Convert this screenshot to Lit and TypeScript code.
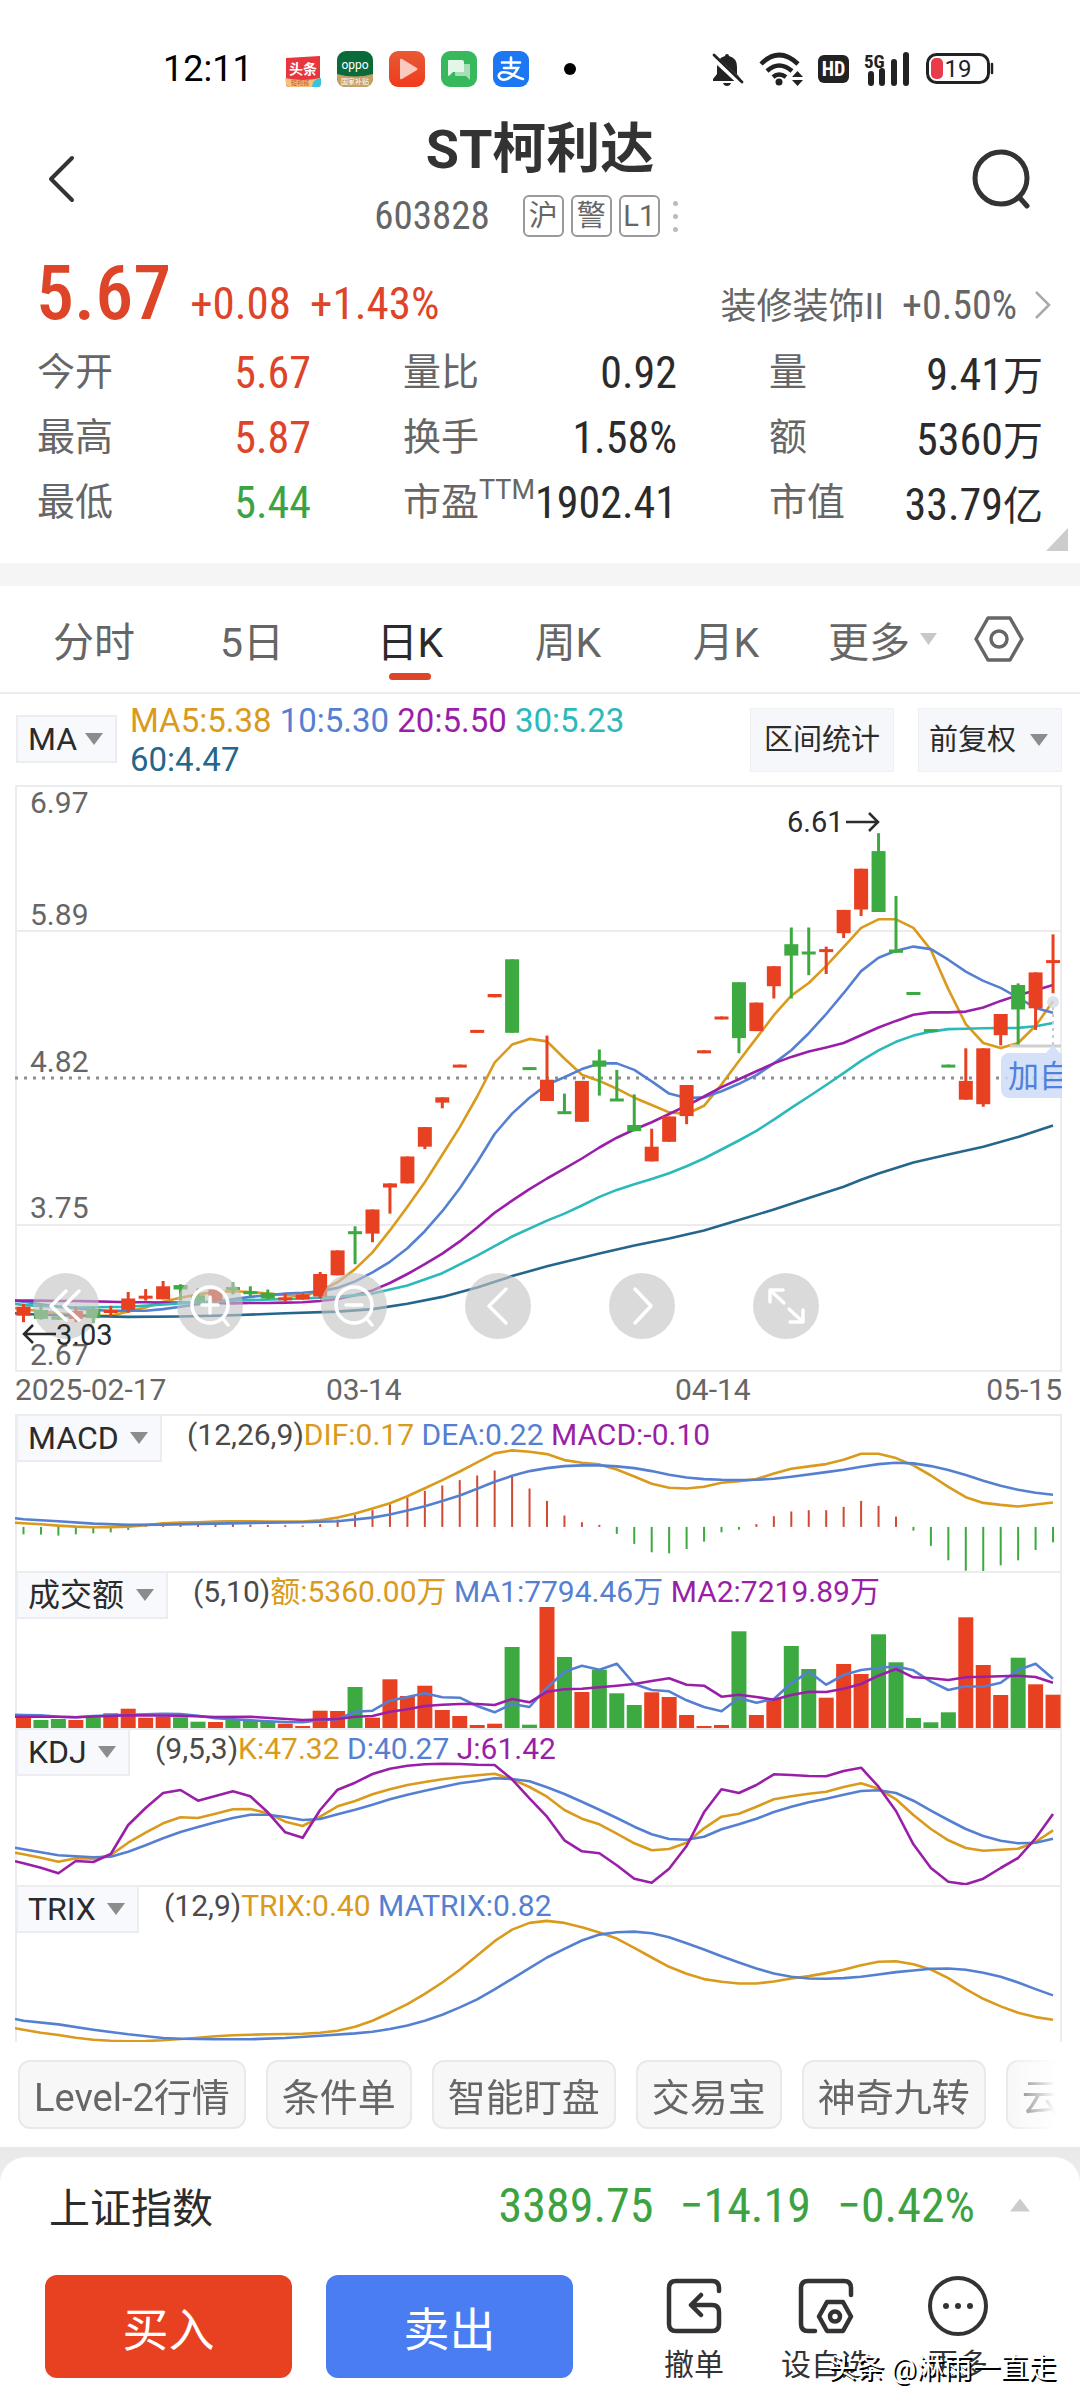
import { LitElement, html, svg, css, nothing } from "lit";
import { customElement, property } from "lit/decorators.js";
import { classMap } from "lit/directives/class-map.js";

const UP = "#e84122";
const DOWN = "#3daa41";
const ORANGE = "#da9a1c";
const BLUE = "#5580d2";
const PURPLE = "#9a1fa8";
const TEAL = "#2bb9b9";
const NAVY = "#24668c";

/* Plot geometry shared by the price chart and all indicator panels. */
const WIDTH = 1047;
const PRICE_HEIGHT = 587;
const PANEL_HEIGHT = 157;
const SLOT = 17.45;
const xAt = (i: number) => 8.5 + i * SLOT;

type Domain = [number, number];
type Line = { color: string; points: number[]; sparse?: boolean };
type Legend = { color: string; text: string };

const scale = (v: number, [top, bottom]: Domain, height: number) =>
  Math.round(((v - top) / (bottom - top)) * height * 10) / 10;

function drawLine(line: Line, domain: Domain, height: number) {
  const pairs: Array<[number, number]> = [];
  if (line.sparse) {
    for (let i = 0; i < line.points.length; i += 2) pairs.push([line.points[i], line.points[i + 1]]);
  } else {
    line.points.forEach((v, i) => pairs.push([i, v]));
  }
  const start = `0,${scale(pairs[0][1] - (pairs[1][1] - pairs[0][1]) / 2, domain, height)}`;
  const path = pairs.map(([i, v]) => `${xAt(i).toFixed(1)},${scale(v, domain, height)}`).join(" ");
  return svg`<polyline points="${start} ${path}" fill="none" stroke=${line.color} stroke-width="2.6" stroke-linejoin="round"></polyline>`;
}

/* Candles: direction, high, body top, body bottom, low (axis units, top down). */
const PRICE_DOMAIN: Domain = [12, 1450];
const CANDLES: Array<[string, number, number, number, number]> = [
  ["u", 1283, 1290, 1312, 1328], ["d", 1283, 1298, 1320, 1322], ["d", 1310, 1314, 1322, 1322],
  ["u", 1290, 1300, 1320, 1328], ["d", 1290, 1295, 1318, 1330], ["u", 1288, 1298, 1304, 1314],
  ["u", 1254, 1270, 1298, 1305], ["u", 1247, 1263, 1269, 1275], ["u", 1227, 1240, 1272, 1272],
  ["d", 1235, 1237, 1248, 1275], ["d", 1245, 1262, 1276, 1282], ["u", 1248, 1248, 1276, 1280],
  ["d", 1230, 1242, 1246, 1260], ["d", 1240, 1252, 1256, 1265], ["d", 1248, 1256, 1270, 1272],
  ["u", 1258, 1267, 1271, 1278], ["u", 1258, 1260, 1272, 1273], ["u", 1205, 1210, 1265, 1270],
  ["u", 1152, 1152, 1213, 1213], ["d", 1093, 1105, 1111, 1186], ["u", 1052, 1052, 1111, 1132],
  ["u", 988, 988, 998, 1062], ["u", 922, 922, 988, 988], ["u", 850, 850, 898, 904],
  ["u", 777, 777, 790, 804], ["u", 697, 697, 703, 703], ["u", 612, 612, 619, 619],
  ["u", 524, 524, 532, 532], ["d", 439, 439, 619, 619], ["d", 703, 703, 709, 709],
  ["u", 626, 734, 786, 786], ["d", 768, 811, 817, 817], ["u", 737, 737, 837, 837],
  ["d", 660, 687, 702, 773], ["d", 710, 780, 786, 786], ["d", 770, 845, 860, 860],
  ["u", 854, 898, 934, 934], ["u", 824, 824, 886, 886], ["u", 747, 747, 823, 843],
  ["u", 662, 662, 669, 669], ["u", 579, 579, 586, 586], ["d", 495, 495, 632, 669],
  ["u", 545, 545, 615, 615], ["u", 456, 456, 505, 535], ["d", 361, 402, 430, 535],
  ["d", 361, 420, 426, 478], ["u", 408, 414, 420, 475], ["u", 318, 318, 375, 387],
  ["u", 217, 217, 317, 333], ["d", 130, 174, 323, 323], ["d", 284, 415, 423, 423],
  ["d", 519, 519, 525, 525], ["d", 610, 610, 616, 616], ["d", 697, 697, 703, 703],
  ["u", 657, 737, 783, 783], ["u", 657, 657, 794, 800], ["u", 573, 573, 625, 650],
  ["d", 498, 502, 562, 650], ["u", 471, 471, 559, 612], ["u", 378, 441, 447, 522],
];

const AVERAGES: Line[] = [
  { color: ORANGE, points: [1296, 1301, 1306, 1310, 1312, 1312, 1302, 1292, 1278, 1268, 1260, 1254, 1252, 1254, 1258, 1262, 1264, 1252, 1230, 1198, 1157, 1103, 1045, 985, 918, 850, 775, 692, 648, 634, 640, 682, 722, 737, 756, 778, 796, 814, 818, 798, 746, 688, 632, 576, 528, 497, 455, 409, 362, 341, 341, 362, 416, 512, 598, 644, 656, 644, 602, 542] },
  { color: BLUE, points: [1278, 1284, 1290, 1294, 1298, 1300, 1300, 1300, 1296, 1290, 1284, 1278, 1272, 1266, 1262, 1258, 1256, 1252, 1244, 1228, 1206, 1180, 1147, 1105, 1056, 1000, 936, 867, 817, 778, 746, 728, 708, 694, 694, 710, 738, 768, 779, 777, 762, 744, 723, 694, 662, 620, 573, 522, 468, 435, 418, 408, 414, 440, 469, 492, 509, 533, 558, 570] },
  { color: PURPLE, points: [1275, 1275, 1276, 1276, 1277, 1278, 1279, 1279, 1280, 1280, 1281, 1281, 1282, 1281, 1281, 1280, 1279, 1276, 1271, 1262, 1250, 1232, 1210, 1186, 1160, 1130, 1096, 1060, 1030, 1002, 976, 952, 927, 900, 876, 856, 838, 818, 798, 775, 752, 733, 713, 694, 678, 665, 655, 644, 625, 606, 590, 575, 569, 569, 567, 557, 541, 527, 515, 502] },
  { color: TEAL, sparse: true, points: [0, 1286, 3, 1292, 6, 1290, 9, 1282, 12, 1275, 16, 1270, 18, 1266, 20, 1258, 22, 1238, 24, 1208, 26, 1165, 28, 1118, 30, 1079, 31, 1062, 32, 1042, 33, 1021, 34, 1004, 35, 990, 36, 977, 37, 963, 38, 946, 39, 927, 40, 905, 41, 883, 42, 859, 43, 832, 44, 803, 45, 775, 46, 747, 47, 718, 48, 688, 49, 662, 50, 641, 51, 626, 52, 616, 53, 610, 54, 609, 55, 608, 57, 607, 58, 603, 59, 595] },
  { color: NAVY, sparse: true, points: [0, 1308, 3, 1312, 6, 1315, 9, 1314, 12, 1311, 15, 1306, 18, 1302, 20, 1296, 22, 1283, 24, 1266, 26, 1243, 28, 1215, 30, 1191, 33, 1160, 35, 1140, 37, 1123, 39, 1103, 41, 1078, 43, 1052, 45, 1024, 47, 996, 48, 979, 49, 964, 50, 950, 51, 937, 53, 917, 55, 898, 57, 874, 59, 846] },
];

const MACD_BARS = [402, 403, 406, 402, 399, 396, 389, 376, 374, 373, 372, 372, 371, 373, 374, 375, 376, 372, 358, 345, 330, 312, 292, 272, 256, 240, 226, 211, 230, 265, 302, 346, 366, 374, 401, 431, 456, 459, 446, 424, 396, 388, 372, 348, 334, 330, 330, 320, 302, 317, 349, 391, 437, 480, 511, 512, 495, 480, 449, 426];
const TURNOVER_BARS = [952, 960, 957, 960, 952, 940, 926, 953, 950, 952, 965, 966, 960, 962, 966, 971, 978, 932, 933, 861, 953, 838, 888, 857, 930, 948, 975, 971, 741, 974, 621, 771, 876, 809, 880, 915, 877, 891, 945, 978, 975, 694, 945, 896, 738, 807, 893, 792, 822, 703, 787, 954, 967, 937, 652, 795, 885, 773, 853, 884];

interface Panel {
  name: string;
  args: string;
  legend: Legend[];
  domain: Domain;
  bars?: "macd" | "turnover";
  lines: Line[];
}

const PANELS: Panel[] = [
  {
    name: "MACD",
    args: "(12,26,9)",
    legend: [{ color: ORANGE, text: "DIF:0.17" }, { color: BLUE, text: "DEA:0.22" }, { color: PURPLE, text: "MACD:-0.10" }],
    domain: [42, 512],
    bars: "macd",
    lines: [
      { color: ORANGE, points: [369, 372, 376, 379, 381, 381, 379, 375, 369, 367, 366, 364, 363, 363, 364, 364, 364, 360, 352, 340, 325, 309, 288, 264, 240, 214, 187, 160, 151, 155, 162, 180, 188, 193, 208, 229, 251, 263, 265, 260, 248, 243, 237, 220, 206, 199, 192, 179, 161, 161, 174, 196, 226, 260, 291, 308, 314, 319, 313, 307] },
      { color: BLUE, sparse: true, points: [0, 357, 2, 363, 4, 370, 6, 374, 8, 373, 11, 370, 14, 367, 16, 366, 18, 363, 20, 352, 21, 343, 22, 331, 23, 318, 24, 302, 25, 286, 26, 266, 27, 245, 28, 227, 29, 213, 30, 204, 31, 198, 32, 196, 33, 196, 34, 199, 35, 204, 36, 213, 37, 224, 38, 232, 39, 237, 40, 239, 41, 240, 42, 239, 43, 236, 44, 230, 46, 216, 47, 209, 48, 200, 49, 192, 50, 188, 51, 190, 52, 198, 53, 210, 54, 225, 55, 242, 56, 257, 57, 269, 58, 278, 59, 284] },
    ],
  },
  {
    name: "成交额",
    args: "(5,10)",
    legend: [{ color: ORANGE, text: "额:5360.00万" }, { color: BLUE, text: "MA1:7794.46万" }, { color: PURPLE, text: "MA2:7219.89万" }],
    domain: [513, 984],
    bars: "turnover",
    lines: [
      { color: BLUE, points: [945, 946, 950, 952, 948, 946, 944, 943, 941, 942, 947, 955, 958, 961, 964, 966, 967, 961, 958, 935, 932, 902, 891, 880, 892, 893, 918, 937, 912, 921, 863, 815, 797, 809, 791, 852, 870, 874, 901, 921, 934, 894, 908, 897, 850, 815, 854, 825, 810, 804, 799, 811, 845, 870, 859, 860, 848, 810, 791, 836] },
      { color: PURPLE, sparse: true, points: [0, 950, 2, 950, 3, 952, 6, 946, 9, 947, 11, 951, 13, 950, 16, 960, 18, 957, 19, 950, 20, 948, 21, 935, 22, 928, 23, 918, 24, 914, 25, 912, 26, 912, 27, 915, 28, 897, 29, 907, 30, 875, 31, 868, 32, 866, 34, 857, 35, 852, 36, 843, 37, 835, 38, 854, 39, 857, 40, 890, 41, 884, 42, 891, 43, 899, 44, 885, 45, 875, 46, 876, 47, 866, 48, 852, 49, 827, 50, 807, 51, 832, 52, 835, 53, 840, 54, 832, 55, 830, 57, 827, 58, 831, 59, 848] },
    ],
  },
  {
    name: "KDJ",
    args: "(9,5,3)",
    legend: [{ color: ORANGE, text: "K:47.32" }, { color: BLUE, text: "D:40.27" }, { color: PURPLE, text: "J:61.42" }],
    domain: [24, 495],
    lines: [
      { color: ORANGE, points: [403, 413, 425, 415, 416, 405, 368, 338, 310, 292, 294, 281, 268, 267, 280, 305, 318, 290, 259, 243, 223, 208, 195, 186, 178, 171, 166, 161, 178, 201, 230, 270, 296, 313, 341, 370, 391, 387, 368, 325, 290, 281, 260, 238, 229, 221, 215, 201, 190, 206, 238, 285, 327, 361, 384, 392, 389, 386, 366, 331] },
      { color: BLUE, points: [388, 397, 406, 409, 412, 410, 395, 376, 355, 336, 321, 307, 294, 284, 284, 291, 300, 297, 283, 269, 254, 238, 224, 212, 201, 190, 183, 175, 177, 184, 202, 222, 245, 269, 294, 320, 343, 357, 359, 350, 328, 313, 296, 276, 260, 247, 236, 224, 213, 211, 219, 242, 272, 300, 327, 348, 362, 370, 368, 356] },
      { color: PURPLE, points: [430, 443, 460, 423, 426, 402, 315, 264, 219, 210, 242, 228, 214, 229, 277, 337, 353, 270, 209, 188, 162, 146, 137, 133, 131, 132, 134, 135, 178, 235, 290, 361, 394, 400, 436, 476, 488, 446, 378, 277, 208, 219, 195, 163, 165, 168, 169, 153, 143, 200, 273, 373, 444, 485, 493, 476, 444, 414, 355, 282] },
    ],
  },
  {
    name: "TRIX",
    args: "(12,9)",
    legend: [{ color: ORANGE, text: "TRIX:0.40" }, { color: BLUE, text: "MATRIX:0.82" }],
    domain: [495, 967],
    lines: [
      { color: ORANGE, points: [930, 939, 946, 954, 960, 963, 965, 964, 962, 958, 954, 950, 947, 945, 944, 943, 942, 939, 933, 921, 903, 879, 853, 822, 788, 750, 707, 664, 629, 609, 603, 609, 622, 638, 656, 684, 713, 741, 762, 778, 786, 791, 791, 785, 776, 769, 760, 750, 736, 726, 724, 733, 749, 775, 808, 837, 860, 879, 892, 900] },
      { color: BLUE, sparse: true, points: [0, 903, 2, 914, 4, 930, 6, 944, 8, 955, 9, 957, 11, 959, 13, 959, 15, 955, 17, 948, 19, 941, 20, 936, 21, 928, 22, 917, 23, 903, 24, 885, 25, 863, 26, 839, 27, 809, 28, 777, 29, 745, 30, 713, 31, 687, 32, 662, 33, 644, 34, 637, 35, 635, 36, 640, 37, 652, 38, 670, 39, 689, 40, 709, 41, 728, 42, 746, 43, 761, 44, 771, 45, 776, 46, 777, 47, 775, 48, 771, 49, 764, 50, 757, 51, 752, 52, 747, 53, 746, 54, 750, 55, 759, 56, 771, 57, 788, 58, 808, 59, 827] },
    ],
  },
];

const shared = css`
  * { box-sizing: border-box; }
  button, select { font: inherit; color: inherit; margin: 0; padding: 0; border: 0; background: none; border-radius: 0; }
  svg { display: block; }
  .picker { display: inline-grid; align-items: center; color: #2b2b2b; font-size: 32px; }
  .picker > * { grid-area: 1 / 1; }
  .picker select { appearance: none; height: 48px; padding: 0 41px 0 10px; border: 2px solid #ebedf0; background: #f8f9fc; font-size: 32px; }
  .caret { width: 18px; height: 12px; justify-self: end; margin-right: 14px; background: #8c8c8c; clip-path: polygon(0 0, 100% 0, 50% 100%); pointer-events: none; }
`;

@customElement("price-chart")
export class PriceChart extends LitElement {
  static styles = [shared, css`
    :host { display: grid; overflow: hidden; }
    :host > * { grid-area: 1 / 1; }
    .plot { width: 100%; height: auto; }
    .marks { pointer-events: none; }
    .axis { font-size: 30px; fill: #666; }
    .mark { font-size: 29px; fill: #2b2b2b; }
    .tag { font-size: 31px; fill: #4f80dc; }
    .tools { align-self: end; display: flex; gap: 78px; padding: 0 0 33px 18px; }
    .tool { width: 66px; height: 66px; flex: none; border-radius: 50%; background: rgba(196, 196, 196, 0.62); display: grid; place-items: center; }
  `];

  private tool(label: string, icon: unknown) {
    return html`<button class="tool" aria-label=${label}>
      <svg width="66" height="66" viewBox="0 0 66 66" fill="none" stroke="#fff" stroke-width="3.5" stroke-linecap="round" stroke-linejoin="round">${icon}</svg>
    </button>`;
  }

  render() {
    const y = (v: number) => scale(v, PRICE_DOMAIN, PRICE_HEIGHT);
    return html`
      <svg class="plot" viewBox="0 0 ${WIDTH} ${PRICE_HEIGHT}">
        <g stroke="#ececee" stroke-width="2" fill="none">
          <rect x="1" y="1" width="1045" height="585"></rect>
          <path d="M0 146H1047M0 440H1047"></path>
        </g>
        <path d="M0 293H1047" stroke="#8f8f8f" stroke-width="3" stroke-dasharray="3 6"></path>
        <g class="axis">
          <text x="15" y="28">6.97</text><text x="15" y="140">5.89</text><text x="15" y="287">4.82</text>
          <text x="15" y="433">3.75</text><text x="15" y="580">2.67</text>
        </g>
        ${AVERAGES.map((l) => drawLine(l, PRICE_DOMAIN, PRICE_HEIGHT))}
        ${CANDLES.map(([dir, high, top, bottom, low], i) => svg`<g fill=${dir === "u" ? UP : DOWN}>
          <rect x=${xAt(i) - 1.5} y=${y(high)} width="3" height=${Math.max(y(low) - y(high), 1)}></rect>
          <rect x=${xAt(i) - 7} y=${y(top)} width="14" height=${Math.max(y(bottom) - y(top), 3)}></rect>
        </g>`)}
        <path d="M995 261H1046" stroke="#cfcfcf" stroke-width="3"></path>
        <path d="M1038 222V262" stroke="#c4cad6" stroke-width="2" stroke-dasharray="3 4"></path>
        <circle cx="1038" cy="217" r="6" fill="#d3dbe9" opacity="0.8"></circle>
        <path d="M1031 268L1038 260L1045 268Z" fill="#d5e1f9"></path>
        <rect x="986" y="268" width="80" height="45" rx="8" fill="#cfddf8" opacity="0.88"></rect>
        <text class="tag" x="993" y="302">加自选</text>
      </svg>
      <div class="tools">
        ${this.tool("最早", svg`<path d="M33 18L18 33L33 47M46 18L31 33L46 47"></path>`)}
        ${this.tool("放大", svg`<circle cx="33" cy="32" r="18"></circle><path d="M46 46L51 52M33 24V40M25 32H41"></path>`)}
        ${this.tool("缩小", svg`<circle cx="33" cy="32" r="18"></circle><path d="M46 46L51 52M25 32H41"></path>`)}
        ${this.tool("上一页", svg`<path d="M41 16L24 33L41 50"></path>`)}
        ${this.tool("下一页", svg`<path d="M26 16L42 33L26 50"></path>`)}
        ${this.tool("全屏", svg`<path d="M17 29V17H30M18 18L31 30M50 37V49H37M49 48L36 36"></path>`)}
      </div>
      <svg class="plot marks" viewBox="0 0 ${WIDTH} ${PRICE_HEIGHT}">
        <text class="mark" x="772" y="47">6.61</text>
        <text class="mark" x="41" y="560">3.03</text>
        <path d="M831 37H862M854 28L863 37L854 46M41 549H9M18 540L9 549L18 558" stroke="#2b2b2b" stroke-width="2.5" fill="none"></path>
      </svg>`;
  }
}

@customElement("indicator-panel")
export class IndicatorPanel extends LitElement {
  static styles = [shared, css`
    :host { display: grid; }
    :host > * { grid-area: 1 / 1; }
    .plot { width: 100%; height: auto; }
    .head { display: flex; align-items: flex-start; gap: 25px; align-self: start; padding-left: 1px; }
    .legend { font-size: 30px; line-height: 42px; color: #4a4a4a; white-space: nowrap; }
  `];

  @property({ attribute: false }) panel: Panel = PANELS[0];

  private bars() {
    const { bars, domain } = this.panel;
    const y = (v: number) => scale(v, domain, PANEL_HEIGHT);
    if (bars === "macd") {
      return MACD_BARS.map((v, i) => svg`<rect x=${xAt(i) - 1} width="2" y=${y(Math.min(v, 380))} height=${y(Math.max(v, 380)) - y(Math.min(v, 380))} fill=${v < 380 ? "#cf4a35" : DOWN}></rect>`);
    }
    if (bars === "turnover") {
      return TURNOVER_BARS.map((v, i) => svg`<rect x=${xAt(i) - 7.5} width="15" y=${y(v)} height=${PANEL_HEIGHT - y(v)} fill=${CANDLES[i][0] === "u" ? UP : DOWN}></rect>`);
    }
    return nothing;
  }

  render() {
    const p = this.panel;
    return html`
      <svg class="plot" viewBox="0 0 ${WIDTH} ${PANEL_HEIGHT}">
        <path d="M0 1H1046V157M1 0V157" stroke="#ececee" stroke-width="2" fill="none"></path>
        ${this.bars()}
        ${p.lines.map((l) => drawLine(l, p.domain, PANEL_HEIGHT))}
      </svg>
      <div class="head">
        <label class="picker"><select aria-label="指标"><option>${p.name}</option></select><i class="caret"></i></label>
        <div class="legend">${p.args}${p.legend.map((l, i) => html`${i ? " " : ""}<span style="color:${l.color}">${l.text}</span>`)}</div>
      </div>`;
  }
}

@customElement("app-root")
export class AppRoot extends LitElement {
  static styles = [shared, css`
    :host { display: block; background: #fff; color: #2b2b2b; font-family: Roboto, "Noto Sans CJK SC", sans-serif; }
    .num { font-family: "Roboto Condensed", "Liberation Sans Narrow", Roboto, "Noto Sans CJK SC", sans-serif; }
    .up { color: #dd4428; }
    .down { color: #3da342; }

    .status { display: flex; align-items: center; height: 104px; padding: 34px 86px 0 163px; color: #000; }
    .time { font-size: 36px; margin-right: 32px; }
    .apps { display: flex; gap: 16px; align-items: center; }
    .dot { width: 12px; height: 12px; border-radius: 50%; background: #000; margin-left: 35px; }
    .signals { display: flex; align-items: center; gap: 14px; margin-left: auto; }
    .signals svg { overflow: visible; }

    .top { display: grid; grid-template-columns: 120px 1fr 120px; align-items: center; padding-top: 16px; }
    .back { justify-self: start; padding-left: 44px; }
    .search { justify-self: end; padding-right: 47px; }
    .name { margin: 0; text-align: center; font-size: 54px; line-height: 60px; font-weight: 700; color: #333; }
    .code { display: flex; justify-content: center; align-items: center; gap: 7px; margin-top: 15px; padding-right: 28px; color: #666; font-size: 39px; line-height: 42px; }
    .code .num { margin-right: 26px; }
    .badge { width: 41px; height: 42px; border: 2px solid #999; border-radius: 6px; font-size: 29px; line-height: 38px; text-align: center; }
    .more { display: grid; gap: 8px; margin-left: 6px; }
    .more i { width: 5px; height: 5px; border-radius: 50%; background: #bbb; }

    .quote { position: relative; padding-bottom: 28px; }
    .headline { display: flex; align-items: baseline; height: 103px; padding: 16px 28px 0 36px; line-height: 80px; }
    .price { font-size: 76px; font-weight: 500; }
    .delta { font-size: 45px; margin-left: 19px; }
    .sector { margin-left: auto; display: flex; align-items: baseline; gap: 18px; color: #666; font-size: 36px; text-decoration: none; }
    .sector .num { font-size: 40px; }
    .facts { display: grid; grid-template-columns: repeat(3, minmax(0, 1fr)); column-gap: 92px; margin: 0; padding: 0 37px; }
    .fact { display: flex; align-items: center; height: 65px; white-space: nowrap; }
    .fact dt { font-size: 38px; line-height: 65px; color: #666; }
    .fact dt sup { font-size: 27px; line-height: 1; vertical-align: 16px; }
    .fact dd { margin: 0 0 0 auto; font-size: 44px; }
    .fact dd small { font-size: 40px; }
    .corner { position: absolute; right: 12px; bottom: 12px; width: 22px; height: 23px; background: #ccc; clip-path: polygon(100% 0, 100% 100%, 0 100%); }

    .tabs { display: flex; align-items: center; height: 131px; border-top: 23px solid #f5f5f5; border-bottom: 2px solid #ececec; padding: 0 56px 0 15px; color: #666; font-size: 41px; }
    .tab { flex: 1; position: relative; height: 106px; }
    .active { color: #2b2b2b; }
    .active::after { content: ""; position: absolute; left: 50%; bottom: 12px; width: 42px; height: 7px; margin-left: -21px; border-radius: 4px; background: #dd4428; }
    .others { display: flex; align-items: center; gap: 10px; height: 106px; margin: 0 37px 0 23px; }
    .others i { width: 17px; height: 12px; background: #c8c8c8; clip-path: polygon(0 0, 100% 0, 50% 100%); }

    .overlay { display: flex; align-items: flex-start; height: 91px; padding: 14px 18px 0 16px; font-size: 33px; line-height: 39px; }
    .overlay .ma { margin-top: 7px; }
    .overlay .ma select { padding-right: 37px; }
    .averages { flex: 1; max-width: 570px; margin: -7px auto 0 13px; padding-right: 40px; }
    .action { display: inline-grid; align-items: center; height: 64px; background: #f5f7fa; border: 1px solid #eef0f4; padding: 0 13px; font-size: 29px; line-height: 62px; }
    .adjust { margin-left: 24px; font-size: 29px; }
    .adjust select { height: 64px; border: 1px solid #eef0f4; background: #f5f7fa; padding: 0 44px 0 10px; font-size: 29px; }

    .charts { margin: 0 18px 0 15px; }
    .dates { display: grid; grid-template-columns: 311px 349px 1fr auto; height: 42px; font-size: 30px; line-height: 36px; color: #666; }
    .last { text-align: right; }

    .chips { display: flex; gap: 20px; margin: 0 24px 0 18px; padding: 18px 0; height: 105px; overflow: hidden; mask-image: linear-gradient(to right, #000 95%, transparent); }
    .chip { flex: none; height: 69px; padding: 0 14px; border: 2px solid #e9e9e9; border-radius: 12px; background: #f7f7f7; color: #666; font-size: 38px; white-space: nowrap; }

    .dock { position: relative; background: linear-gradient(#e9e9e9, #eee 40px, #fff 60px); padding-top: 10px; }
    .sheet { background: #fff; border-radius: 26px 26px 0 0; padding: 0 45px 22px; }
    .index { display: flex; align-items: center; height: 118px; padding: 0 5px 22px 4px; font-size: 41px; }
    .index .num { font-size: 48px; margin-left: 26px; }
    .index .num.first { margin-left: auto; }
    .index i { width: 20px; height: 13px; margin-left: 35px; background: #ccc; clip-path: polygon(50% 0, 100% 100%, 0 100%); }
    .trade { display: grid; grid-template-columns: 247px 247px 1fr; column-gap: 34px; align-items: start; }
    .deal { height: 103px; border-radius: 12px; color: #fff; font-size: 46px; padding-bottom: 2px; }
    .buy { background: #e84122; }
    .sell { background: #4a7df2; }
    .links { display: grid; grid-template-columns: repeat(3, 132px); margin-left: 21px; }
    .link { display: grid; justify-items: center; gap: 7px; font-size: 30px; line-height: 42px; color: #333; white-space: nowrap; }
    .watermark { position: absolute; right: 24px; bottom: 21px; color: #fff; font-size: 28px; line-height: 36px; text-shadow: 2px 2px 0 #000; white-space: nowrap; }
  `];

  private fact(label: unknown, value: unknown, tone = "") {
    return html`<div class="fact"><dt>${label}</dt><dd class=${classMap({ num: true, up: tone === "up", down: tone === "down" })}>${value}</dd></div>`;
  }

  private statusBar() {
    return html`<div class="status">
      <span class="time">12:11</span>
      <div class="apps">
        <svg width="36" height="36" viewBox="0 0 36 36">
          <path d="M1 7L35 5V34Q35 36 32 36H4Q1 36 1 33Z" fill="#e8363f"></path>
          <path d="M0 27Q18 31 35 27V34Q35 36 32 36H5Q1 36 1 33Z" fill="#f6c07e"></path>
          <path d="M27 36Q27 28 36 27V33Q36 36 33 36Z" fill="#35c4dc"></path>
          <text x="18" y="23" text-anchor="middle" font-size="14" font-weight="700" fill="#fff">头条</text>
          <text x="15" y="34" text-anchor="middle" font-size="6" fill="#c8502a">短视频</text>
        </svg>
        <svg width="36" height="36" viewBox="0 0 36 36">
          <rect width="36" height="36" rx="9" fill="#0a6b3a"></rect>
          <path d="M0 23Q18 28 36 23V27Q36 36 27 36H9Q0 36 0 27Z" fill="#c6a065"></path>
          <text x="18" y="18" text-anchor="middle" font-size="12" fill="#fff">oppo</text>
          <text x="18" y="33" text-anchor="middle" font-size="7" fill="#fff">国家补贴</text>
        </svg>
        <svg width="36" height="36" viewBox="0 0 36 36">
          <defs><linearGradient id="play" x1="0" y1="0" x2="0" y2="1"><stop offset="0" stop-color="#e85a34"></stop><stop offset="1" stop-color="#f03a1c"></stop></linearGradient></defs>
          <rect width="36" height="36" rx="9" fill="url(#play)"></rect>
          <path d="M11 9V27Q11 29 13 28L28 19Q29 18 28 17L13 8Q11 7 11 9Z" fill="#fbc9bd"></path>
        </svg>
        <svg width="36" height="36" viewBox="0 0 36 36">
          <rect width="36" height="36" rx="9" fill="#37b85c"></rect>
          <path d="M14 13H28Q29 13 29 14V29L25 25H15Q14 25 14 24Z" fill="#a6dfb5"></path>
          <path d="M8 9H21Q23 9 23 11V20Q23 21 22 21H12L8 25Q7 25 7 24V10Q7 9 8 9Z" fill="#e3f6e8"></path>
        </svg>
        <svg width="36" height="36" viewBox="0 0 36 36">
          <rect width="36" height="36" rx="9" fill="#1d77f2"></rect>
          <g fill="none" stroke="#fff" stroke-width="2.6" stroke-linecap="round">
            <path d="M9 11.5H27M18 6.5V17M11 17H25Q21 25 14 28C9 30 5 27 6 24C7 20 13 21 17 22.5C22 24.5 25 27 30 28"></path>
          </g>
        </svg>
      </div>
      <i class="dot"></i>
      <div class="signals">
        <svg width="34" height="36" viewBox="0 0 34 36">
          <path d="M17 3Q19 3 19 5Q27 7 27 16V23L31 28V30H3V28L7 23V16Q7 7 15 5Q15 3 17 3ZM13 32H21Q20 35 17 35Q14 35 13 32Z" fill="#222"></path>
          <path d="M3 6L32 33" stroke="#fff" stroke-width="6"></path>
          <path d="M4 4L32 31" stroke="#222" stroke-width="2.8" stroke-linecap="round"></path>
        </svg>
        <svg width="46" height="36" viewBox="0 0 46 36">
          <g fill="none" stroke="#222" stroke-width="4.5"><path d="M3 13Q21 -5 40 13M9 20Q21 9 34 20M15 26Q21 21 28 26"></path></g>
          <circle cx="21" cy="31" r="3.5" fill="#222"></circle>
          <path d="M34 26H45L39.5 20ZM34 29H45L39.5 35Z" fill="#222"></path>
        </svg>
        <svg width="32" height="30" viewBox="0 0 32 30">
          <rect x="0" y="1" width="31" height="28" rx="6" fill="#222"></rect>
          <text class="num" x="15.5" y="22" text-anchor="middle" font-size="20" font-weight="700" fill="#fff">HD</text>
        </svg>
        <svg width="48" height="34" viewBox="0 0 48 34">
          <text class="num" x="0" y="16" font-size="19" font-weight="700" fill="#222">5G</text>
          <path d="M7 22V31M18 19V31M30 10V31M42 3V31" stroke="#222" stroke-width="6" stroke-linecap="round"></path>
        </svg>
        <svg width="68" height="32" viewBox="0 0 68 32">
          <rect x="1.5" y="1.5" width="61" height="28" rx="9" fill="none" stroke="#222" stroke-width="3"></rect>
          <rect x="5" y="5" width="12" height="21" rx="5" fill="#ea3b4b"></rect>
          <path d="M66 11V20" stroke="#222" stroke-width="2.5" stroke-linecap="round"></path>
          <text x="32" y="24" text-anchor="middle" font-size="24" fill="#222">19</text>
        </svg>
      </div>
    </div>`;
  }

  render() {
    return html`
      ${this.statusBar()}
      <header class="top">
        <button class="back" aria-label="返回">
          <svg width="32" height="50" viewBox="0 0 32 50" fill="none" stroke="#333" stroke-width="4" stroke-linecap="round" stroke-linejoin="round"><path d="M28 4L7 25L28 46"></path></svg>
        </button>
        <div>
          <h1 class="name">ST柯利达</h1>
          <div class="code">
            <span class="num">603828</span>
            <span class="badge">沪</span><span class="badge">警</span><span class="badge">L1</span>
            <span class="more"><i></i><i></i><i></i></span>
          </div>
        </div>
        <button class="search" aria-label="搜索">
          <svg width="62" height="62" viewBox="0 0 62 62" fill="none" stroke="#333" stroke-width="5" stroke-linecap="round"><circle cx="30" cy="30" r="26"></circle><path d="M48 49L56 58"></path></svg>
        </button>
      </header>

      <section class="quote">
        <div class="headline">
          <span class="num price up">5.67</span><span class="num delta up">+0.08</span><span class="num delta up">+1.43%</span>
          <a class="sector" href="#sector"><span>装修装饰II</span><span class="num">+0.50%</span>
            <svg width="17" height="28" viewBox="0 0 17 28" fill="none" stroke="#aaa" stroke-width="2.5"><path d="M1 1L14 14L1 27"></path></svg></a>
        </div>
        <dl class="facts">
          ${this.fact("今开", "5.67", "up")}${this.fact("量比", "0.92")}${this.fact("量", html`9.41<small>万</small>`)}
          ${this.fact("最高", "5.87", "up")}${this.fact("换手", "1.58%")}${this.fact("额", html`5360<small>万</small>`)}
          ${this.fact("最低", "5.44", "down")}${this.fact(html`市盈<sup>TTM</sup>`, "1902.41")}${this.fact("市值", html`33.79<small>亿</small>`)}
        </dl>
        <i class="corner"></i>
      </section>

      <nav class="tabs">
        ${["分时", "5日", "日K", "周K", "月K"].map((t) => html`<button class=${classMap({ tab: true, active: t === "日K" })}>${t}</button>`)}
        <button class="others">更多<i></i></button>
        <button aria-label="设置">
          <svg width="50" height="48" viewBox="0 0 50 48" fill="none" stroke="#666" stroke-width="3.5" stroke-linejoin="round"><path d="M14 3H36L48 24L36 45H14L2 24Z"></path><circle cx="25" cy="24" r="8"></circle></svg>
        </button>
      </nav>

      <div class="overlay">
        <label class="picker ma"><select aria-label="主图指标"><option>MA</option></select><i class="caret"></i></label>
        <div class="averages">
          <span style="color:${ORANGE}">MA5:5.38</span>
          <span style="color:${BLUE}">10:5.30</span>
          <span style="color:${PURPLE}">20:5.50</span>
          <span style="color:${TEAL}">30:5.23</span>
          <span style="color:${NAVY}">60:4.47</span>
        </div>
        <button class="action">区间统计</button>
        <label class="picker adjust"><select aria-label="复权"><option>前复权</option></select><i class="caret"></i></label>
      </div>

      <main class="charts">
        <price-chart></price-chart>
        <div class="dates"><span>2025-02-17</span><span>03-14</span><span>04-14</span><span class="last">05-15</span></div>
        ${PANELS.map((p) => html`<indicator-panel .panel=${p}></indicator-panel>`)}
      </main>

      <div class="chips">
        ${["Level-2行情", "条件单", "智能盯盘", "交易宝", "神奇九转", "云参数"].map((c) => html`<button class="chip">${c}</button>`)}
      </div>

      <footer class="dock">
        <div class="sheet">
          <div class="index">
            <span>上证指数</span>
            <span class="num first down">3389.75</span><span class="num down">−14.19</span><span class="num down">−0.42%</span><i></i>
          </div>
          <div class="trade">
            <button class="deal buy">买入</button>
            <button class="deal sell">卖出</button>
            <div class="links">
              <button class="link">
                <svg width="62" height="62" viewBox="0 0 62 62" fill="none" stroke="#333" stroke-width="4.5" stroke-linecap="round" stroke-linejoin="round"><path d="M56 16V13Q56 6 49 6H13Q6 6 6 13V49Q6 56 13 56H49Q56 56 56 49V37Q56 30 49 30H28M38 20L28 30L38 40"></path></svg>撤单</button>
              <button class="link">
                <svg width="62" height="62" viewBox="0 0 62 62" fill="none" stroke="#333" stroke-width="4.5" stroke-linecap="round" stroke-linejoin="round"><path d="M56 20V13Q56 6 49 6H13Q6 6 6 13V49Q6 56 13 56H20M32 27H48L56 41.5L48 56H32L24 41.5Z"></path><circle cx="40" cy="41.5" r="5"></circle></svg>设自选</button>
              <button class="link">
                <svg width="62" height="62" viewBox="0 0 62 62" fill="none" stroke="#333" stroke-width="4"><circle cx="31" cy="31" r="28"></circle><g fill="#333" stroke="none"><circle cx="19" cy="31" r="3"></circle><circle cx="31" cy="31" r="3"></circle><circle cx="43" cy="31" r="3"></circle></g></svg>更多</button>
            </div>
          </div>
        </div>
        <div class="watermark">头条 @淋雨一直走</div>
      </footer>
    `;
  }
}
